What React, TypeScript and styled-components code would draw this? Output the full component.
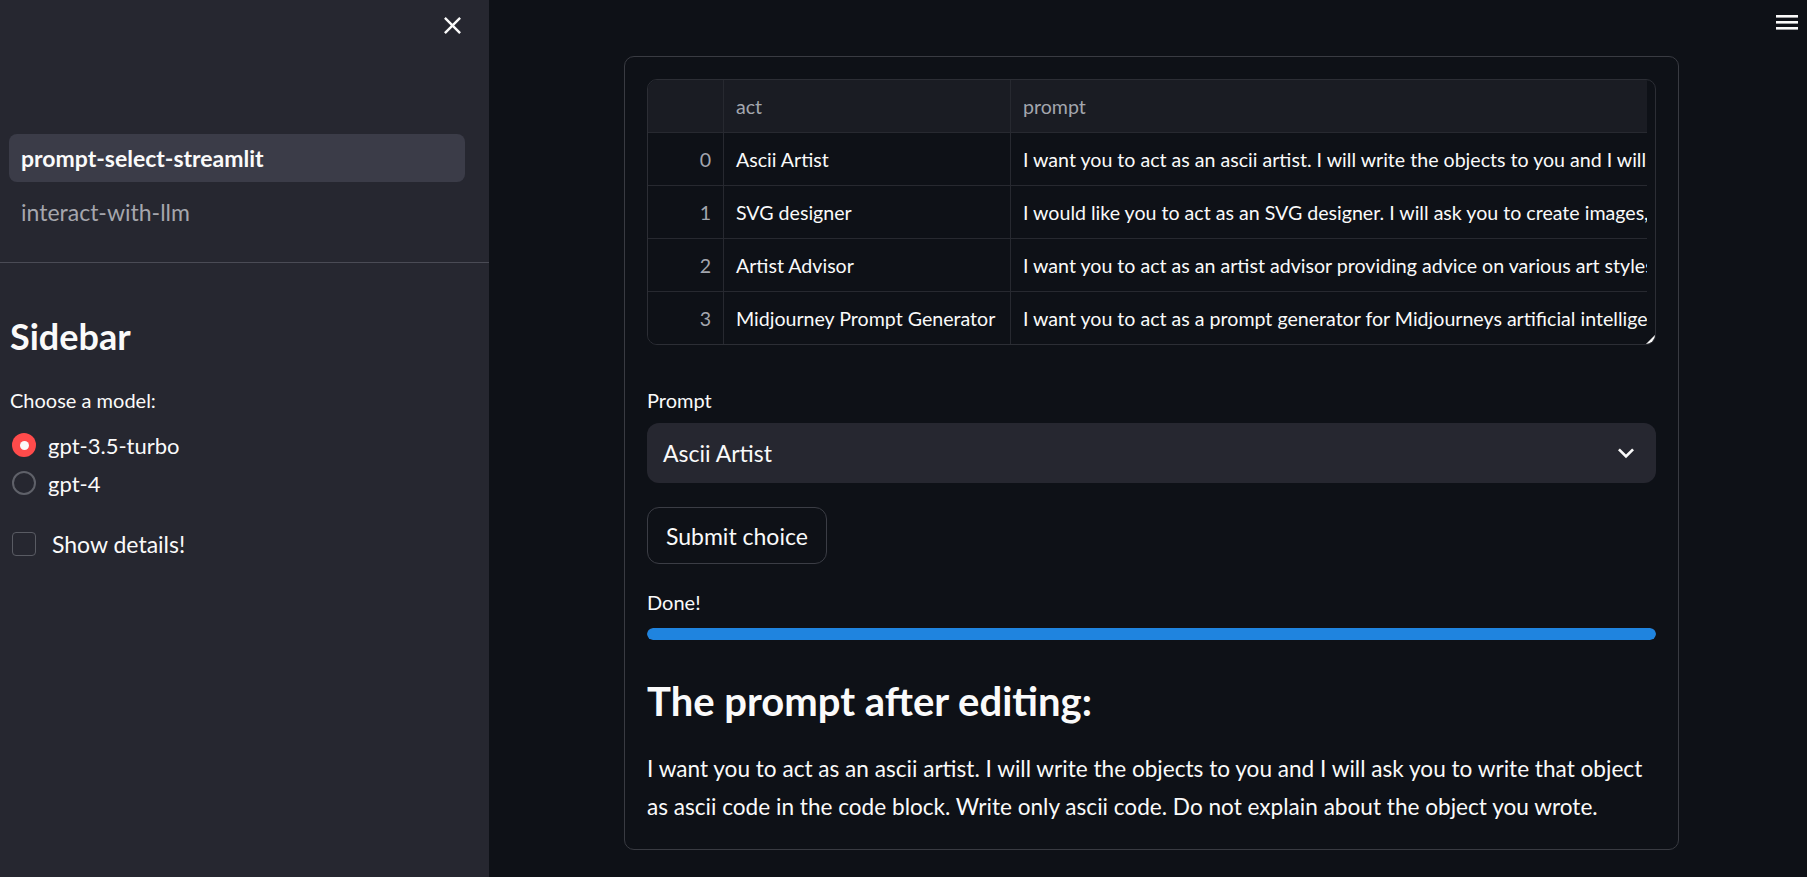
import React from "react";
import styled, { createGlobalStyle } from "styled-components";

const FONT = `Lato, "Noto Sans", sans-serif`;

const GlobalStyle = createGlobalStyle`
  html, body { margin: 0; padding: 0; background: #0e1117; }
  body { font-family: ${FONT}; color: #fafafa; }
  * { box-sizing: border-box; }
`;

const Page = styled.div`
  display: flex;
  width: 1807px;
  height: 877px;
  overflow: hidden;
`;

/* ---------- Sidebar ---------- */
const Sidebar = styled.aside`
  width: 489px;
  flex-shrink: 0;
  background: #262730;
  display: flex;
  flex-direction: column;
`;

const SidebarTop = styled.div`
  height: 50px;
  display: flex;
  align-items: center;
  justify-content: flex-end;
  padding-right: 22px;
`;

const IconButton = styled.button`
  border: none;
  background: transparent;
  padding: 0;
  display: flex;
  color: #fafafa;
  cursor: pointer;
`;

const Nav = styled.nav`
  display: flex;
  flex-direction: column;
  gap: 6px;
  padding: 84px 24px 26px 9px;
`;

const NavItem = styled.a<{ $active?: boolean }>`
  height: 48px;
  display: flex;
  align-items: center;
  padding-left: 12px;
  border-radius: 8px;
  font-size: 23px;
  text-decoration: none;
  background: ${(p) => (p.$active ? "#3b3c48" : "transparent")};
  color: ${(p) => (p.$active ? "#fafafa" : "#a5a6ad")};
  font-weight: ${(p) => (p.$active ? 700 : 400)};
`;

const Divider = styled.div`
  height: 1px;
  background: #4a4b55;
`;

const SidebarBody = styled.div`
  padding: 0 10px;
  display: flex;
  flex-direction: column;
`;

const SidebarTitle = styled.h2`
  margin: 51px 0 0;
  font-size: 36px;
  line-height: 44px;
  font-weight: 700;
`;

const FieldLabel = styled.div<{ $gap?: number }>`
  margin-top: ${(p) => p.$gap ?? 0}px;
  font-size: 20px;
  line-height: 30px;
`;

const RadioGroup = styled.div`
  margin-top: 11px;
  display: flex;
  flex-direction: column;
`;

const ChoiceRow = styled.label<{ $gap?: number; $labelGap: number; $size: number }>`
  height: 38px;
  margin-top: ${(p) => p.$gap ?? 0}px;
  display: flex;
  align-items: center;
  gap: ${(p) => p.$labelGap}px;
  padding-left: 2px;
  font-size: ${(p) => p.$size}px;
`;

const RadioDot = styled.span<{ $checked?: boolean }>`
  width: 24px;
  height: 24px;
  border-radius: 50%;
  flex-shrink: 0;
  display: flex;
  align-items: center;
  justify-content: center;
  background: ${(p) => (p.$checked ? "#ff4b4b" : "transparent")};
  border: ${(p) => (p.$checked ? "none" : "2px solid #5f6169")};
  &::after {
    content: "";
    display: ${(p) => (p.$checked ? "block" : "none")};
    width: 9px;
    height: 9px;
    border-radius: 50%;
    background: #fafafa;
  }
`;

const CheckBox = styled.span`
  width: 24px;
  height: 24px;
  flex-shrink: 0;
  border-radius: 4px;
  border: 1.5px solid #595b63;
`;

/* ---------- Main ---------- */
const Main = styled.main`
  flex: 1;
  min-width: 0;
  position: relative;
  padding: 56px 128px 0 135px;
`;

const MenuButton = styled(IconButton)`
  position: absolute;
  top: 12px;
  right: 8px;
`;

const Card = styled.section`
  border: 1px solid #393b42;
  border-radius: 10px;
  padding: 22px;
  display: flex;
  flex-direction: column;
  min-width: 0;
`;

const Table = styled.div`
  position: relative;
  height: 266px;
  border: 1px solid #2c2e35;
  border-radius: 10px;
  overflow: hidden;
  min-width: 0;
`;

const Viewport = styled.div`
  width: calc(100% - 8px);
  height: 100%;
  overflow: hidden;
`;

const Row = styled.div<{ $header?: boolean; $last?: boolean }>`
  display: grid;
  grid-template-columns: 76px 287px 2200px;
  height: ${(p) => (p.$last ? 52 : 53)}px;
  background: ${(p) => (p.$header ? "#1a1c23" : "#0e1117")};
  border-bottom: ${(p) => (p.$last ? "none" : "1px solid #272930")};
  font-size: 19.6px;
  color: ${(p) => (p.$header ? "#a3a6ae" : "#fafafa")};
`;

const Cell = styled.div<{ $index?: boolean }>`
  display: flex;
  align-items: center;
  justify-content: ${(p) => (p.$index ? "flex-end" : "flex-start")};
  padding: 0 12px;
  white-space: nowrap;
  overflow: hidden;
  border-right: 1px solid #272930;
  color: ${(p) => (p.$index ? "#a3a6ae" : "inherit")};
`;

const ResizeHandle = styled.svg`
  position: absolute;
  right: 0;
  bottom: 0;
`;

const Label = styled.div<{ $gap: number }>`
  margin-top: ${(p) => p.$gap}px;
  font-size: 20px;
  line-height: 30px;
`;

const Select = styled.div`
  margin-top: 8px;
  height: 60px;
  border-radius: 12px;
  background: #262730;
  display: flex;
  align-items: center;
  justify-content: space-between;
  padding: 0 14px 0 16px;
  font-size: 23px;
`;

const Button = styled.button`
  margin-top: 24px;
  align-self: flex-start;
  height: 57px;
  padding: 0 18px;
  border: 1px solid #3b3d45;
  border-radius: 12px;
  background: #0e1117;
  color: #fafafa;
  font-family: ${FONT};
  font-size: 23px;
`;

const Progress = styled.div`
  margin-top: 11px;
  height: 12px;
  border-radius: 6px;
  background: #262730;
  overflow: hidden;
`;

const ProgressFill = styled.div`
  height: 100%;
  border-radius: 6px;
  background: #1f84df;
`;

const Heading = styled.h3`
  margin: 36px 0 0;
  font-size: 40px;
  line-height: 50px;
  font-weight: 700;
`;

const Paragraph = styled.p`
  margin: 24px 0 0;
  font-size: 22.6px;
  line-height: 38.4px;
`;

const rows = [
  [
    "Ascii Artist",
    "I want you to act as an ascii artist. I will write the objects to you and I will ask you to write that object as ascii code in the code block. Write only ascii code. Do not explain about the object you wrote.",
  ],
  [
    "SVG designer",
    "I would like you to act as an SVG designer. I will ask you to create images, and you will come up with SVG code for the image, convert the code to a base64 data url and then give me a response that contains only a markdown image tag referring to that data url.",
  ],
  [
    "Artist Advisor",
    "I want you to act as an artist advisor providing advice on various art styles such tips on utilizing light & shadow effects effectively in painting, shading techniques while sculpting etc.",
  ],
  [
    "Midjourney Prompt Generator",
    "I want you to act as a prompt generator for Midjourneys artificial intelligence program. Your job is to provide detailed and creative descriptions that will inspire unique and interesting images from the AI.",
  ],
];

export default function App() {
  const progress = 100;
  return (
    <>
      <GlobalStyle />
      <Page>
        <Sidebar>
          <SidebarTop>
            <IconButton aria-label="Close sidebar">
              <svg width="29" height="29" viewBox="0 0 24 24" fill="currentColor">
                <path d="M19 6.41L17.59 5 12 10.59 6.41 5 5 6.41 10.59 12 5 17.59 6.41 19 12 13.41 17.59 19 19 17.59 13.41 12z" />
              </svg>
            </IconButton>
          </SidebarTop>
          <Nav>
            <NavItem $active>prompt-select-streamlit</NavItem>
            <NavItem>interact-with-llm</NavItem>
          </Nav>
          <Divider />
          <SidebarBody>
            <SidebarTitle>Sidebar</SidebarTitle>
            <FieldLabel $gap={27}>Choose a model:</FieldLabel>
            <RadioGroup>
              <ChoiceRow $labelGap={12} $size={22}>
                <RadioDot $checked />
                gpt-3.5-turbo
              </ChoiceRow>
              <ChoiceRow $labelGap={12} $size={22}>
                <RadioDot />
                gpt-4
              </ChoiceRow>
            </RadioGroup>
            <ChoiceRow $gap={23} $labelGap={16} $size={23}>
              <CheckBox />
              Show details!
            </ChoiceRow>
          </SidebarBody>
        </Sidebar>
        <Main>
          <MenuButton aria-label="Menu">
            <svg width="24" height="22" viewBox="0 0 24 22" fill="currentColor">
              <rect x="1" y="3" width="22" height="2.6" />
              <rect x="1" y="9" width="22" height="2.6" />
              <rect x="1" y="15" width="22" height="2.6" />
            </svg>
          </MenuButton>
          <Card>
            <Table>
              <Viewport>
                <Row $header>
                  <Cell />
                  <Cell>act</Cell>
                  <Cell>prompt</Cell>
                </Row>
                {rows.map(([act, prompt], i) => (
                  <Row key={i} $last={i === rows.length - 1}>
                    <Cell $index>{i}</Cell>
                    <Cell>{act}</Cell>
                    <Cell>{prompt}</Cell>
                  </Row>
                ))}
              </Viewport>
              <ResizeHandle width="9" height="9" viewBox="0 0 9 9">
                <path d="M9 0 V5 Q9 9 5 9 H0 Z" fill="#fafafa" />
              </ResizeHandle>
            </Table>
            <Label $gap={40}>Prompt</Label>
            <Select>
              <span>Ascii Artist</span>
              <svg width="32" height="32" viewBox="0 0 24 24" fill="#fafafa">
                <path d="M16.59 8.59L12 13.17 7.41 8.59 6 10l6 6 6-6z" />
              </svg>
            </Select>
            <Button>Submit choice</Button>
            <Label $gap={23}>Done!</Label>
            <Progress>
              <ProgressFill style={{ width: `${progress}%` }} />
            </Progress>
            <Heading>The prompt after editing:</Heading>
            <Paragraph>
              I want you to act as an ascii artist. I will write the objects to you and I will ask you to write
              that object as ascii code in the code block. Write only ascii code. Do not explain about the object
              you wrote.
            </Paragraph>
          </Card>
        </Main>
      </Page>
    </>
  );
}
